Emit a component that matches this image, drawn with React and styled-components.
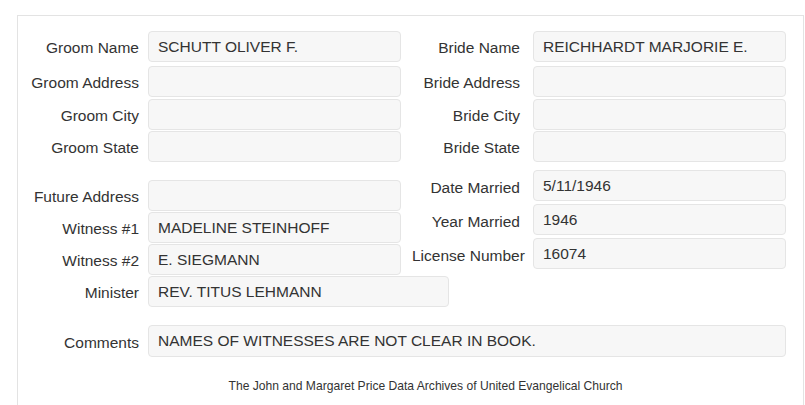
import React from "react";
import styled, { createGlobalStyle } from "styled-components";

const GlobalStyle = createGlobalStyle`
  body {
    margin: 0;
    background: #fff;
    font-family: "Liberation Sans", Arial, sans-serif;
    color: #333;
  }
`;

const Panel = styled.div`
  margin: 15px 0 0 17px;
  width: 787px;
  min-height: 400px;
  border: 1px solid #e3e3e3;
  border-bottom: none;
  padding: 15px 0 0 0;
  box-sizing: border-box;
`;

const Section = styled.div`
  display: flex;
  margin-bottom: ${({ $gap }) => $gap || 0}px;
`;

const Column = styled.div`
  display: flex;
  flex-direction: column;
  width: ${({ $w }) => ($w ? `${$w}px` : "auto")};
  flex-shrink: 0;
  padding-top: ${({ $top }) => $top || 0}px;
`;

const Row = styled.div`
  display: flex;
  align-items: center;
  margin-bottom: ${({ $mb }) => ($mb === undefined ? 2 : $mb)}px;
`;

const Label = styled.div`
  width: ${({ $right }) => ($right ? 108 : 121)}px;
  flex-shrink: 0;
  margin-left: ${({ $right }) => ($right ? 11 : 0)}px;
  margin-right: ${({ $right }) => ($right ? 13 : 9)}px;
  padding-top: ${({ $dy }) => $dy || 3}px;
  text-align: right;
  white-space: nowrap;
  font-size: 15.5px;
  line-height: 18px;
  color: #333;
`;

const Field = styled.div`
  width: ${({ $w }) => $w || 253}px;
  height: ${({ $h }) => $h || 31}px;
  flex-shrink: 0;
  box-sizing: border-box;
  background: #f7f7f7;
  border: 1px solid #e5e5e5;
  border-radius: 4px;
  padding: 0 9px;
  display: flex;
  align-items: center;
  font-size: 15.5px;
  color: #333;
  white-space: nowrap;
`;

const Footer = styled.div`
  text-align: center;
  font-size: 12.1px;
  color: #333;
  margin-top: 22px;
  padding-left: 30px;
`;

const groom = [
  ["Groom Name", "SCHUTT OLIVER F."],
  ["Groom Address", ""],
  ["Groom City", ""],
  ["Groom State", ""],
];

const bride = [
  ["Bride Name", "REICHHARDT MARJORIE E."],
  ["Bride Address", ""],
  ["Bride City", ""],
  ["Bride State", ""],
];

const left = [
  ["Future Address", "", 253],
  ["Witness #1", "MADELINE STEINHOFF", 253],
  ["Witness #2", "E. SIEGMANN", 253],
  ["Minister", "REV. TITUS LEHMANN", 301],
];

const right = [
  ["Date Married", "5/11/1946"],
  ["Year Married", "1946"],
  ["License Number", "16074"],
];

const topMargins = [4, 2, 1, 0];

const App = () => {
  return (
    <>
      <GlobalStyle />
      <Panel>
        <Section $gap={8}>
          <Column $w={383}>
            {groom.map(([label, value], i) => (
              <Row key={label} $mb={topMargins[i]}>
                <Label>{label}</Label>
                <Field>{value}</Field>
              </Row>
            ))}
          </Column>
          <Column>
            {bride.map(([label, value], i) => (
              <Row key={label} $mb={topMargins[i]}>
                <Label $right>{label}</Label>
                <Field>{value}</Field>
              </Row>
            ))}
          </Column>
        </Section>
        <Section $gap={18}>
          <Column $w={383} $top={10}>
            {left.map(([label, value, w], i) => (
              <Row key={label} $mb={i === 3 ? 0 : 1}>
                <Label>{label}</Label>
                <Field $w={w}>{value}</Field>
              </Row>
            ))}
          </Column>
          <Column>
            {right.map(([label, value]) => (
              <Row key={label} $mb={3}>
                <Label $right $dy={5}>{label}</Label>
                <Field>{value}</Field>
              </Row>
            ))}
          </Column>
        </Section>
        <Row $mb={0}>
          <Label>Comments</Label>
          <Field $w={638} $h={32}>NAMES OF WITNESSES ARE NOT CLEAR IN BOOK.</Field>
        </Row>
        <Footer>The John and Margaret Price Data Archives of United Evangelical Church</Footer>
      </Panel>
    </>
  );
};

export default App;
